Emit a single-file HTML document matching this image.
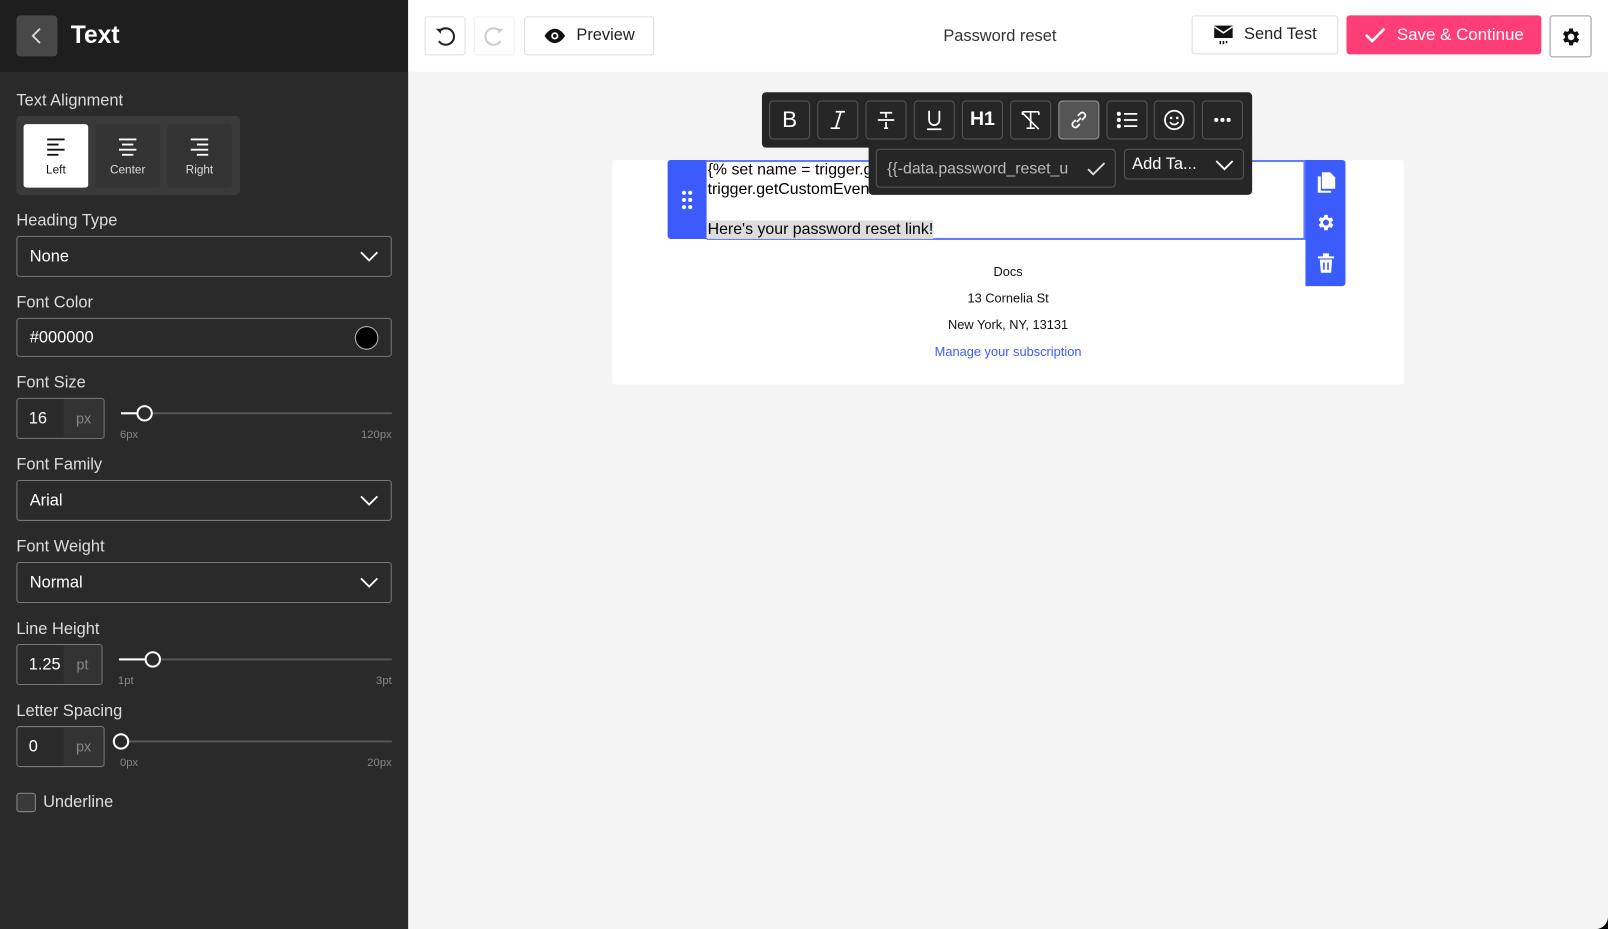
<!DOCTYPE html>
<html><head><meta charset="utf-8">
<style>
*{box-sizing:border-box;margin:0;padding:0}
html,body{width:1608px;height:929px;overflow:hidden;background:#000}
#s{position:absolute;left:0;top:0;width:1568px;height:906px;transform:scale(1.02551);transform-origin:0 0;font-family:"Liberation Sans",sans-serif;background:#f4f4f4;border-radius:0 0 12px 0;overflow:hidden}
.a{position:absolute}
.lab{position:absolute;left:16px;color:#ddd;font-size:16px;margin-top:2px}
.sel{position:absolute;left:16px;width:366px;height:40px;border:1px solid #7a7a7a;border-radius:3px;color:#fff;font-size:16px;padding-left:12px;line-height:40px}
.chev{position:absolute;right:12px;top:13px}
.inp{position:absolute;left:16px;height:40px;border:1px solid #7a7a7a;border-radius:3px;color:#fff;font-size:16px;overflow:hidden}
.inp .v{position:absolute;left:11px;top:11px}
.inp .u{position:absolute;right:0;top:0;bottom:0;width:39px;background:#333;color:#888;font-size:14px;text-align:center;line-height:38px}
.sl{position:absolute;height:2px;background:#555}
.th{position:absolute;width:16px;height:16px;border:2px solid #fff;border-radius:50%;background:#2a2a2a}
.sm{position:absolute;color:#888;font-size:11px}
.tb{position:absolute;top:98px;width:40px;height:38px;border:1px solid #5a5a5a;border-radius:4px;display:flex;align-items:center;justify-content:center;color:#fff}
.btn{position:absolute;border:1px solid #ddd;border-radius:3px;background:#fff;display:flex;align-items:center;justify-content:center;font-size:16px;color:#222}
.t{position:absolute;left:690px;font-family:"Liberation Sans",Arial,sans-serif;font-size:15.5px;color:#000;white-space:nowrap}
.f{position:absolute;left:597px;width:772px;text-align:center;font-size:12.5px;color:#111}
</style></head><body><div id="s">
<div class="a" style="left:0;top:0;width:398px;height:906px;background:#2a2a2a"></div>
<div class="a" style="left:0;top:0;width:398px;height:70px;background:#1e1e1e"></div>
<div class="a" style="left:16px;top:15px;width:40px;height:40px;background:#484848;border-radius:4px"><svg width="40" height="40"><path d="M23 13l-7 7 7 7" stroke="#ddd" stroke-width="1.8" fill="none"/></svg></div>
<div class="a" style="left:69px;top:21px;color:#fff;font-size:24px;font-weight:bold">Text</div>

<div class="lab" style="top:88px">Text Alignment</div>
<div class="a" style="left:16px;top:113px;width:218px;height:77px;background:#3a3a3a;border-radius:4px"></div>
<div class="a" style="left:23px;top:121px;width:63px;height:62px;background:#fff;border-radius:3px"><svg class="a" style="left:22px;top:13px" width="20" height="18"><path d="M1 2h17M1 7h11M1 12h17M1 17h11" stroke="#111" stroke-width="1.8"/></svg><div class="a" style="left:0;width:63px;top:39px;text-align:center;font-size:11.5px;color:#111">Left</div></div>
<div class="a" style="left:93px;top:121px;width:63px;height:62px;background:#333;border-radius:3px"><svg class="a" style="left:22px;top:13px" width="20" height="18"><path d="M1 2h17M4 7h11M1 12h17M4 17h11" stroke="#fff" stroke-width="1.8"/></svg><div class="a" style="left:0;width:63px;top:39px;text-align:center;font-size:11.5px;color:#ddd">Center</div></div>
<div class="a" style="left:163px;top:121px;width:63px;height:62px;background:#333;border-radius:3px"><svg class="a" style="left:22px;top:13px" width="20" height="18"><path d="M1 2h17M7 7h11M1 12h17M7 17h11" stroke="#fff" stroke-width="1.8"/></svg><div class="a" style="left:0;width:63px;top:39px;text-align:center;font-size:11.5px;color:#ddd">Right</div></div>

<div class="lab" style="top:205px">Heading Type</div>
<div class="sel" style="top:230px">None<svg class="chev" width="18" height="12"><path d="M1 2l8 8 8-8" stroke="#fff" stroke-width="1.8" fill="none"/></svg></div>

<div class="lab" style="top:285px">Font Color</div>
<div class="sel" style="top:310px;height:38px;line-height:38px">#000000<div class="a" style="right:12px;top:7px;width:23px;height:23px;border-radius:50%;background:#000;border:1px solid #bbb"></div></div>

<div class="lab" style="top:363px">Font Size</div>
<div class="inp" style="top:388px;width:86px"><span class="v">16</span><span class="u">px</span></div>
<div class="sl" style="left:118px;top:402px;width:264px"></div><div class="sl" style="left:118px;top:402px;width:20px;background:#fff"></div>
<div class="th" style="left:133px;top:395px"></div>
<div class="sm" style="left:117px;top:418px">6px</div><div class="sm" style="right:1186px;top:418px">120px</div>

<div class="lab" style="top:443px">Font Family</div>
<div class="sel" style="top:468px">Arial<svg class="chev" width="18" height="12"><path d="M1 2l8 8 8-8" stroke="#fff" stroke-width="1.8" fill="none"/></svg></div>

<div class="lab" style="top:523px">Font Weight</div>
<div class="sel" style="top:548px">Normal<svg class="chev" width="18" height="12"><path d="M1 2l8 8 8-8" stroke="#fff" stroke-width="1.8" fill="none"/></svg></div>

<div class="lab" style="top:603px">Line Height</div>
<div class="inp" style="top:628px;width:84px"><span class="v">1.25</span><span class="u" style="width:37px">pt</span></div>
<div class="sl" style="left:116px;top:642px;width:266px"></div><div class="sl" style="left:116px;top:642px;width:26px;background:#fff"></div>
<div class="th" style="left:141px;top:635px"></div>
<div class="sm" style="left:115px;top:658px">1pt</div><div class="sm" style="right:1186px;top:658px">3pt</div>

<div class="lab" style="top:683px">Letter Spacing</div>
<div class="inp" style="top:708px;width:86px"><span class="v">0</span><span class="u">px</span></div>
<div class="sl" style="left:118px;top:722px;width:264px"></div>
<div class="th" style="left:110px;top:715px"></div>
<div class="sm" style="left:117px;top:738px">0px</div><div class="sm" style="right:1186px;top:738px">20px</div>

<div class="a" style="left:16px;top:773px;width:19px;height:19px;border:1px solid #888;border-radius:3px;background:#3a3a3a"></div>
<div class="a" style="left:42px;top:774px;color:#ddd;font-size:16px">Underline</div>

<div class="a" style="left:398px;top:0;width:1170px;height:70px;background:#fff"></div>
<div class="btn" style="left:414px;top:16px;width:40px;height:38px"><svg width="22" height="22"><path d="M6 6a8 8 0 1 1 -1 10" stroke="#222" stroke-width="2" fill="none"/><path d="M2 4l5 0 0 5z" fill="#222"/></svg></div>
<div class="btn" style="left:462px;top:16px;width:40px;height:38px;border-color:#eee"><svg width="22" height="22"><path d="M16 6a8 8 0 1 0 1 10" stroke="#ccc" stroke-width="2" fill="none"/><path d="M20 4l-5 0 0 5z" fill="#ccc"/></svg></div>
<div class="btn" style="left:511px;top:16px;width:127px;height:38px"><svg width="22" height="16" style="margin-right:10px"><path d="M1 8C4 3 8 1 11 1s7 2 10 7c-3 5-7 7-10 7S4 13 1 8z" fill="#111"/><circle cx="11" cy="8" r="3.5" fill="#fff"/><circle cx="11" cy="8" r="1.8" fill="#111"/></svg>Preview</div>
<div class="a" style="left:880px;width:190px;text-align:center;top:27px;font-size:16px;color:#333">Password reset</div>
<div class="btn" style="left:1162px;top:15px;width:143px;height:38px"><svg width="20" height="20" style="margin-right:10px"><path d="M1 1h18v12H1z" fill="#111"/><path d="M1 2l9 6 9-6" stroke="#fff" stroke-width="1.5" fill="none"/><path d="M7 16v3M10 16v3M13 16v2" stroke="#111" stroke-width="1.5"/></svg>Send Test</div>
<div class="btn" style="left:1313px;top:15px;width:190px;height:38px;background:#ff3d77;border-color:#ff3d77;color:#fff;font-size:16.5px"><svg width="22" height="16" style="margin-right:10px"><path d="M2 8l6 6L20 2" stroke="#fff" stroke-width="2.5" fill="none"/></svg>Save &amp; Continue</div>
<div class="btn" style="left:1511px;top:15px;width:41px;height:41px;border-color:#999"><svg width="22" height="22" viewBox="0 0 24 24"><path fill="#111" d="M19.4 13a7.5 7.5 0 0 0 0-2l2.1-1.6-2-3.5-2.5 1a7.6 7.6 0 0 0-1.7-1L15 3h-4l-.4 2.7a7.6 7.6 0 0 0-1.7 1l-2.5-1-2 3.5L6.6 11a7.5 7.5 0 0 0 0 2l-2.1 1.6 2 3.5 2.5-1a7.6 7.6 0 0 0 1.7 1L11 21h4l.4-2.7a7.6 7.6 0 0 0 1.7-1l2.5 1 2-3.5zM13 15.5a3.5 3.5 0 1 1 0-7 3.5 3.5 0 0 1 0 7z" transform="translate(-1 0)"/></svg></div>

<div class="a" style="left:597px;top:156px;width:772px;height:219px;background:#fff;border-radius:3px"></div>
<div class="a" style="left:651px;top:156px;width:38px;height:77px;background:#3b5bfd;border-radius:3px 0 0 3px"><svg class="a" style="left:13px;top:29px" width="12" height="20"><g fill="#fff"><circle cx="3" cy="3" r="2"/><circle cx="9" cy="3" r="2"/><circle cx="3" cy="10" r="2"/><circle cx="9" cy="10" r="2"/><circle cx="3" cy="17" r="2"/><circle cx="9" cy="17" r="2"/></g></svg></div>
<div class="a" style="left:689px;top:156px;width:584px;height:78px;border:2px solid #5f7bff;border-left:none"></div>
<div class="t" style="top:157px">{% set name = trigger.g</div>
<div class="t" style="top:176px">trigger.getCustomEven</div>
<div class="t" style="top:215px;background:#ddd">Here's your password reset link!</div>
<div class="a" style="left:1273px;top:156px;width:39px;height:123px;background:#3b5bfd;border-radius:0 3px 3px 0"></div>
<svg class="a" style="left:1283px;top:167px" width="20" height="22"><path d="M6 1h8l5 5v11H6z" fill="#fff"/><path d="M2 5h3v14h10v2H2z" fill="#fff"/></svg>
<svg class="a" style="left:1283px;top:207px" width="20" height="20" viewBox="0 0 24 24"><path fill="#fff" d="M19.4 13a7.5 7.5 0 0 0 0-2l2.1-1.6-2-3.5-2.5 1a7.6 7.6 0 0 0-1.7-1L15 3h-4l-.4 2.7a7.6 7.6 0 0 0-1.7 1l-2.5-1-2 3.5L6.6 11a7.5 7.5 0 0 0 0 2l-2.1 1.6 2 3.5 2.5-1a7.6 7.6 0 0 0 1.7 1L11 21h4l.4-2.7a7.6 7.6 0 0 0 1.7-1l2.5 1 2-3.5zM13 15.5a3.5 3.5 0 1 1 0-7 3.5 3.5 0 0 1 0 7z" transform="translate(-1 0)"/></svg>
<svg class="a" style="left:1285px;top:247px" width="16" height="20"><path d="M0 3h16v2H0zM5 0h6v3H5z" fill="#fff"/><path d="M2 6h12l-1 13H3z" fill="#fff"/><path d="M6 9v7M10 9v7" stroke="#3b5bfd" stroke-width="1.6"/></svg>
<div class="f" style="top:258px;left:597px">Docs</div>
<div class="f" style="top:284px;left:597px">13 Cornelia St</div>
<div class="f" style="top:310px;left:597px">New York, NY, 13131</div>
<div class="f" style="top:336px;left:597px;color:#3b5bfd">Manage your subscription</div>

<div class="a" style="left:743px;top:90px;width:478px;height:54px;background:#262626;border-radius:4px"></div>
<div class="a" style="left:847px;top:140px;width:374px;height:50px;background:#262626;border-radius:0 0 4px 4px"></div>
<div class="tb" style="left:750px;font-size:22px">B</div>
<div class="tb" style="left:797px"><svg width="20" height="22"><path d="M8 3h9M3 19h9M13 3L8 19" stroke="#fff" stroke-width="1.7"/></svg></div>
<div class="tb" style="left:844px"><svg width="20" height="22"><path d="M4 4h12M10 4v5M2 11h16M10 13v6M8 19h4" stroke="#fff" stroke-width="1.7"/></svg></div>
<div class="tb" style="left:891px"><svg width="20" height="22"><path d="M5 2v9a5 5 0 0 0 10 0V2M3 20h14" stroke="#fff" stroke-width="1.7" fill="none"/></svg></div>
<div class="tb" style="left:938px;font-weight:bold;font-size:19px">H1</div>
<div class="tb" style="left:985px"><svg width="22" height="22"><path d="M3 3h16M3 3v3M19 3v3M7 19h8M11 3v16M3 4l16 16" stroke="#fff" stroke-width="1.6" fill="none"/></svg></div>
<div class="tb" style="left:1032px;background:#555;border-color:#999"><svg width="22" height="22"><path d="M9 13l4-4M8 11l-3 3a3 3 0 0 0 4 4l3-3M14 11l3-3a3 3 0 0 0-4-4l-3 3" stroke="#fff" stroke-width="1.7" fill="none"/></svg></div>
<div class="tb" style="left:1079px"><svg width="22" height="20"><g fill="#fff"><circle cx="3" cy="4" r="2"/><circle cx="3" cy="10" r="2"/><circle cx="3" cy="16" r="2"/></g><path d="M8 4h13M8 10h13M8 16h13" stroke="#fff" stroke-width="1.7"/></svg></div>
<div class="tb" style="left:1125px"><svg width="22" height="22"><circle cx="11" cy="11" r="9" stroke="#fff" stroke-width="1.7" fill="none"/><circle cx="8" cy="9" r="1.3" fill="#fff"/><circle cx="14" cy="9" r="1.3" fill="#fff"/><path d="M7 13a4.5 4.5 0 0 0 8 0" stroke="#fff" stroke-width="1.7" fill="none"/></svg></div>
<div class="tb" style="left:1172px"><svg width="18" height="6"><g fill="#fff"><circle cx="3" cy="3" r="2"/><circle cx="9" cy="3" r="2"/><circle cx="15" cy="3" r="2"/></g></svg></div>
<div class="a" style="left:854px;top:145px;width:234px;height:38px;border:1px solid #5a5a5a;border-radius:4px;background:#262626;overflow:hidden"><span class="a" style="left:10px;top:10px;color:#bbb;font-size:15.5px;white-space:nowrap;width:184px;overflow:hidden">{{-data.password_reset_u</span><svg class="a" style="left:204px;top:11px" width="20" height="16"><path d="M2 8l5 5L18 2" stroke="#ddd" stroke-width="1.8" fill="none"/></svg></div>
<div class="a" style="left:1096px;top:145px;width:117px;height:30px;border:1px solid #5a5a5a;border-radius:4px;color:#fff;font-size:16px"><span class="a" style="left:7px;top:6px">Add Ta...</span><svg class="a" style="left:88px;top:9px" width="18" height="12"><path d="M1 2l8 8 8-8" stroke="#fff" stroke-width="1.8" fill="none"/></svg></div>
</div></body></html>
